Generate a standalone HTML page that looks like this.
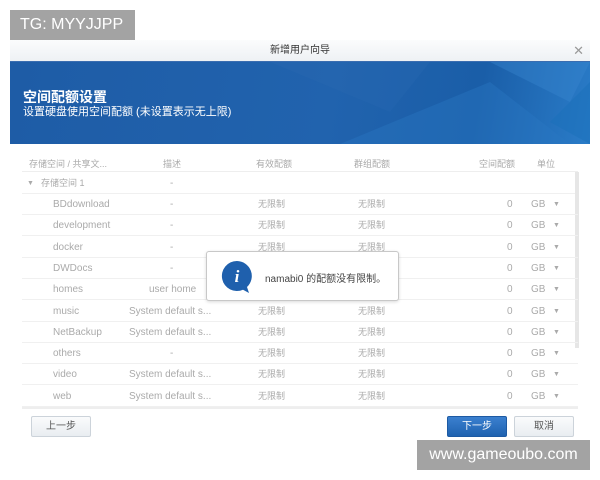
<!DOCTYPE html>
<html><head><meta charset="utf-8"><style>
*{margin:0;padding:0;box-sizing:border-box}
body{width:600px;height:480px;background:#fff;position:relative;overflow:hidden;font-family:"Liberation Sans","Noto Sans CJK SC",sans-serif}
.abs{position:absolute}
.tg{left:10px;top:10px;width:125px;height:30px;background:#a3a3a3;color:#fff;font-size:16px;line-height:30px;padding-left:10px}
.hdr{left:10px;top:40px;width:580px;height:22px;background:linear-gradient(#fbfcfd,#eef1f4);border-bottom:1px solid #3a6db0;text-align:center;font-size:10px;line-height:22px;color:#333}
.x{right:16px;top:40px;color:#999;font-size:13px;line-height:22px}
.ban{left:10px;top:62px;width:580px;height:82px;background:linear-gradient(100deg,#1e5ca6 0%,#2163ae 55%,#1a5ea8 80%,#2a7cc8 100%);overflow:hidden}
.t1{left:23px;top:87px;color:#fff;font-size:14px;font-weight:bold}
.t2{left:23px;top:103px;color:#fff;font-size:11px}
.th{top:157px;font-size:9px;color:#aaa}
.row{left:22px;width:556px;height:21px;border-bottom:1px solid #f0f0f0;font-size:10px;color:#aaa}
.row span{position:absolute;top:0;line-height:21px;height:21px}
.btn{top:416px;height:21px;border:1px solid #ccd3da;background:linear-gradient(#fafbfc,#e9edf1);font-size:10px;text-align:center;line-height:19px;color:#555;border-radius:2px}
</style></head><body>
<div class="abs tg">TG: MYYJJPP</div>
<div class="abs hdr">新增用户向导</div>
<div class="abs x">✕</div>
<div class="abs ban">
<svg width="580" height="82" style="position:absolute;left:0;top:0"><polygon points="330,82 480,20 560,82" fill="#2b78c4" opacity=".4"/><polygon points="480,0 580,0 560,40" fill="#3a86cf" opacity=".4"/><polygon points="540,60 580,20 580,82" fill="#1a6fba" opacity=".5"/><polygon points="260,0 420,0 380,50" fill="#2a6bb4" opacity=".3"/></svg>
</div>
<div class="abs t1">空间配额设置</div>
<div class="abs t2">设置硬盘使用空间配额 (未设置表示无上限)</div>
<div class="abs" style="left:22px;top:152px;width:556px;height:20px;border-bottom:1px solid #eee"></div>
<div class="abs th" style="left:29px">存储空间 / 共享文...</div>
<div class="abs th" style="left:163px">描述</div>
<div class="abs th" style="left:256px">有效配额</div>
<div class="abs th" style="left:354px">群组配额</div>
<div class="abs th" style="left:479px">空间配额</div>
<div class="abs th" style="left:537px">单位</div>
<div class="abs row" style="top:173px"><span style="left:5px;font-size:7px">▼</span><span style="left:19px;font-size:9px">存储空间 1</span><span style="left:148px">-</span></div>
<div class="abs" style="left:575px;top:172px;width:4px;height:176px;background:#e6e6e6"></div>
<div id="rows"></div>
<script>
var d=[["BDdownload","-"],["development","-"],["docker","-"],["DWDocs","-"],["homes","user home"],["music","System default s..."],["NetBackup","System default s..."],["others","-"],["video","System default s..."],["web","System default s..."]];
var h="";d.forEach(function(r,i){var t=194+i*21.3;var c=r[1]=="-"?"left:148px":(r[1]=="user home"?"left:127px":"left:107px");
h+='<div class="abs row" style="top:'+t+'px"><span style="left:31px">'+r[0]+'</span><span style="'+c+'">'+r[1]+'</span><span style="left:236px;font-size:9px">无限制</span><span style="left:336px;font-size:9px">无限制</span><span style="left:485px">0</span><span style="left:509px">GB</span><span style="left:531px;font-size:7px">▼</span></div>';});
document.getElementById("rows").innerHTML=h;
</script>
<div class="abs" style="left:22px;top:407px;width:556px;height:2px;background:#eee"></div>
<div class="abs" style="left:206px;top:251px;width:193px;height:50px;background:#fff;border:1px solid #c8c8c8;border-radius:3px;box-shadow:0 1px 3px rgba(0,0,0,.15)"></div>
<svg class="abs" style="left:220px;top:259px" width="34" height="34"><path d="M17 2a15 15 0 1 0 6 28.7l6 3.3-2-6A15 15 0 0 0 17 2z" fill="#1f60ad"/><text x="17" y="23" fill="#fff" font-size="17" font-weight="bold" font-style="italic" text-anchor="middle" font-family="Liberation Serif,serif">i</text></svg>
<div class="abs" style="left:265px;top:270px;font-size:10px;color:#444">namabi0 的配额没有限制。</div>
<div class="abs btn" style="left:31px;width:60px">上一步</div>
<div class="abs btn" style="left:447px;width:60px;background:linear-gradient(#3b80cf,#1f62b0);border-color:#1d5aa3;color:#fff">下一步</div>
<div class="abs btn" style="left:514px;width:60px">取消</div>
<div class="abs" style="left:417px;top:440px;width:173px;height:30px;background:#a3a3a3;color:#fff;font-size:16px;line-height:30px;text-align:center">www.gameoubo.com</div>
</body></html>
